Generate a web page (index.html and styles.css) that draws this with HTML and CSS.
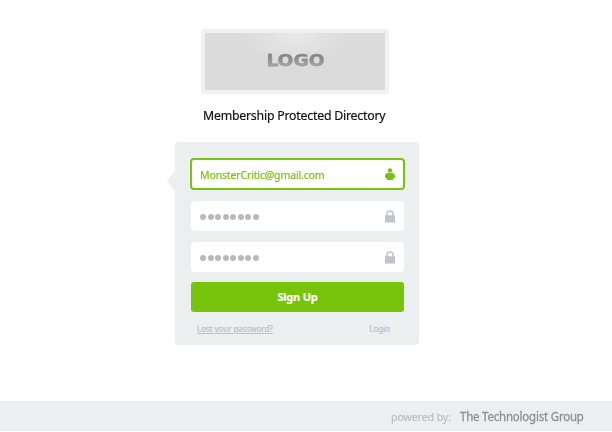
FILE: index.html
```html
<!DOCTYPE html>
<html lang="en">
<head>
<meta charset="utf-8">
<title>Membership Protected Directory</title>
<link rel="stylesheet" href="styles.css">
</head>
<body>
<main class="page">
  <div class="logo"><span class="logo-text">LOGO</span></div>
  <h1 class="title"><span>Membership Protected Directory</span></h1>
  <form class="card">
    <div class="field active">
      <span class="email">MonsterCritic@gmail.com</span>
      <svg class="icon" width="12" height="13" viewBox="0 0 12 13"><circle cx="6" cy="2.5" r="2.2"/><path d="M3.4 4.9H8.6Q11 5.4 11 8V9.8H9.6V11.6Q6 12.8 2.4 11.6V9.8H1V8Q1 5.4 3.4 4.9Z"/></svg>
    </div>
    <div class="field">
      <span class="dots"><i></i><i></i><i></i><i></i><i></i><i></i><i></i><i></i></span>
      <svg class="icon" width="12" height="13" viewBox="0 0 12 13"><path class="shackle" d="M3 6V4A3 3 0 0 1 9 4V6"/><rect x="1" y="5.3" width="10" height="7.2" rx=".6"/></svg>
    </div>
    <div class="field">
      <span class="dots"><i></i><i></i><i></i><i></i><i></i><i></i><i></i><i></i></span>
      <svg class="icon" width="12" height="13" viewBox="0 0 12 13"><path class="shackle" d="M3 6V4A3 3 0 0 1 9 4V6"/><rect x="1" y="5.3" width="10" height="7.2" rx=".6"/></svg>
    </div>
    <button class="submit" type="button">Sign Up</button>
    <div class="links"><a class="lost">Lost your password?</a><a>Login</a></div>
  </form>
</main>
<footer class="footer"><span class="by">powered by:</span><span class="group">The Technologist Group</span></footer>
</body>
</html>
```
FILE: styles.css
```css
* { box-sizing: border-box; }
body {
  margin: 0;
  width: 612px;
  height: 432px;
  overflow: hidden;
  background: #fff;
  font-family: "Noto Sans", "Open Sans", sans-serif;
}
.page { height: 401px; padding: 29px 0 0 175px; }
.logo {
  width: 188px;
  height: 65px;
  margin-left: 26px;
  border: 4px solid #f1f1f1;
  border-radius: 3px;
  background: radial-gradient(ellipse 55px 30px at 50% 0, #e9e9e9, #dbdbdb);
  display: flex;
  align-items: center;
  justify-content: center;
}
.logo-text {
  font: bold 15px/20px "DejaVu Sans", sans-serif;
  transform: translateY(-1px) scaleX(1.24);
  color: transparent;
  background: linear-gradient(#858585 25%, #a5a5a5 75%);
  background-clip: text;
  -webkit-text-stroke: .3px #939393;
}
.title {
  margin: 11px 0 0 28px;
  height: 20px;
  font-size: 13px;
  line-height: 20px;
  font-weight: 400;
  color: #111;
  white-space: nowrap;
  -webkit-text-stroke: .2px #111;
}
.title span { display: inline-block; letter-spacing: -.22px; transform: scaleX(.945); transform-origin: left; }
.card {
  position: relative;
  width: 244px;
  height: 203px;
  margin-top: 17px;
  padding: 16px 15px 0 16px;
  background: #ebeff0;
  border-radius: 4px;
}
.card::before {
  content: "";
  position: absolute;
  left: -8px;
  top: 29px;
  border: solid transparent;
  border-width: 10px 8px 10px 0;
  border-right-color: #ebeff0;
}
.field {
  height: 30px;
  margin-bottom: 11px;
  padding: 0 8px 0 9px;
  border-radius: 4px;
  background: #fff;
  display: flex;
  align-items: center;
  justify-content: space-between;
}
.field.active {
  height: 32px;
  margin: 0 -1px 11px;
  border: 2px solid #78c30b;
  padding: 0 7px 0 8px;
}
.email {
  font-size: 11.5px;
  line-height: 20px;
  padding-top: 2px;
  letter-spacing: -.2px;
  color: #78c30b;
  transform: scaleX(.92);
  transform-origin: left;
  -webkit-text-stroke: .2px #78c30b;
}
.icon { fill: #bec4c9; }
.active .icon { fill: #78c30b; }
.shackle { fill: none; stroke: #bec4c9; stroke-width: 1.5; }
.dots { display: flex; gap: 1.5px; padding-top: 1px; }
.dots i { width: 6px; height: 6px; border-radius: 50%; background: #b7babd; }
.submit {
  display: block;
  width: 213px;
  height: 30px;
  margin-top: -1px;
  padding: 0;
  border: 0;
  border-radius: 3px;
  background: #78c30b;
  color: #fff;
  font: bold 11px/30px "Noto Sans", sans-serif;
  letter-spacing: -.2px;
  -webkit-text-stroke: .2px #fff;
}
.links {
  display: flex;
  justify-content: space-between;
  padding: 10px 14px 0 6px;
  font-size: 8px;
  line-height: 14px;
  letter-spacing: -.06px;
  color: #bcc0c5;
  -webkit-text-stroke: .2px #bcc0c5;
}
.lost { text-decoration: underline; text-underline-offset: 1px; }
.footer {
  height: 30px;
  background: #ebeff0;
  display: flex;
  align-items: center;
  padding-left: 391px;
  white-space: nowrap;
}
.by { width: 69px; font-size: 11.5px; letter-spacing: -.1px; color: #b9bdc0; transform: scaleX(.92); transform-origin: left; -webkit-text-stroke: .2px #b9bdc0; }
.group { font-size: 12.5px; letter-spacing: -.2px; color: #8d8f91; transform: scaleX(.915); transform-origin: left; -webkit-text-stroke: .3px #8d8f91; }
```
